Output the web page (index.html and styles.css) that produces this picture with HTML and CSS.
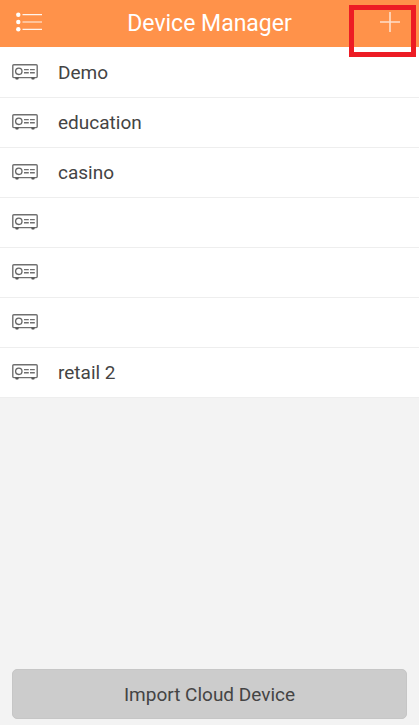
FILE: index.html
```html
<!DOCTYPE html>
<html lang="en">
<head>
<meta charset="utf-8">
<meta name="viewport" content="width=device-width, initial-scale=1">
<title>Device Manager</title>
<link rel="stylesheet" href="styles.css">
</head>
<body>
<svg class="symbols" aria-hidden="true">
  <symbol id="device" viewBox="0 0 26 16">
    <rect x="0.8" y="0.8" width="24.4" height="12.8" rx="1" fill="none" stroke="#707070" stroke-width="1.4"/>
    <circle cx="6.8" cy="7.3" r="3.2" fill="none" stroke="#666" stroke-width="1.3"/>
    <path d="M12 5.6h4.8M18 5.6h4.8M12 8.8h4.8M18 8.8h4.8" fill="none" stroke="#707070" stroke-width="1.4"/>
    <path d="M3 13.5h4l-.8 1.9H3.8zM19 13.5h4l-.8 1.9h-2.4z" fill="#555"/>
  </symbol>
</svg>
<header class="bar">
  <button class="bar-button" type="button" aria-label="Menu">
    <svg width="26" height="20" viewBox="0 0 26 20" fill="#fff" aria-hidden="true">
      <circle cx="2.3" cy="2.7" r="2.2"/><circle cx="2.3" cy="10" r="2.2"/><circle cx="2.3" cy="17.3" r="2.2"/>
      <path d="M6.5 2.7H26M6.5 10H26M6.5 17.3H26" stroke="#fff" stroke-opacity=".9" stroke-width="1.2"/>
    </svg>
  </button>
  <h1 class="title">Device Manager</h1>
  <button class="bar-button" type="button" aria-label="Add device">
    <svg width="20" height="20" viewBox="0 0 20 20" aria-hidden="true">
      <path d="M10 0v20M0 10h20" stroke="#fff" stroke-opacity=".7" stroke-width="1.6"/>
    </svg>
    <span class="highlight"></span>
  </button>
</header>
<main class="content">
  <ul class="devices">
    <li class="device"><svg class="device-icon" aria-hidden="true"><use href="#device"/></svg><span>Demo</span></li>
    <li class="device"><svg class="device-icon" aria-hidden="true"><use href="#device"/></svg><span>education</span></li>
    <li class="device"><svg class="device-icon" aria-hidden="true"><use href="#device"/></svg><span>casino</span></li>
    <li class="device"><svg class="device-icon" aria-hidden="true"><use href="#device"/></svg></li>
    <li class="device"><svg class="device-icon" aria-hidden="true"><use href="#device"/></svg></li>
    <li class="device"><svg class="device-icon" aria-hidden="true"><use href="#device"/></svg></li>
    <li class="device"><svg class="device-icon" aria-hidden="true"><use href="#device"/></svg><span>retail 2</span></li>
  </ul>
</main>
<footer class="footer">
  <button class="import" type="button">Import Cloud Device</button>
</footer>
</body>
</html>
```
FILE: styles.css
```css
* {
  box-sizing: border-box;
}

body {
  display: flex;
  flex-direction: column;
  min-height: 100vh;
  margin: 0;
  background: #f3f3f3;
  color: #444;
  font-family: Roboto, "Liberation Sans", sans-serif;
  font-size: 19px;
}

button {
  border: 0;
  padding: 0;
  color: inherit;
  font: inherit;
}

.symbols {
  position: absolute;
  width: 0;
  height: 0;
}

.bar {
  display: flex;
  align-items: center;
  justify-content: space-between;
  height: 47px;
  padding: 0 16px;
  background: #ff924a;
}

.bar-button {
  position: relative;
  display: flex;
  align-items: center;
  justify-content: center;
  width: 26px;
  height: 44px;
  margin-bottom: 3px;
  background: none;
}

.title {
  margin: 0;
  color: #fff;
  font-size: 23px;
  font-weight: 400;
}

.highlight {
  position: absolute;
  top: 5px;
  right: -13px;
  width: 67px;
  height: 52px;
  border: 5px solid #ed1c24;
}

.devices {
  margin: 0;
  border-top: 1px solid #fff;
  padding: 0;
  list-style: none;
}

.device {
  display: flex;
  align-items: center;
  gap: 20px;
  height: 50px;
  padding: 0 12px;
  border-bottom: 1px solid #eee;
  background: #fff;
}

.device-icon {
  width: 26px;
  height: 16px;
  margin-bottom: 2px;
}

.content {
  flex: 1;
}

.footer {
  padding: 12px 12px 6px;
}

.import {
  width: 100%;
  height: 50px;
  border: 1px solid #c6c6c6;
  border-radius: 5px;
  background: #ccc;
}
```
